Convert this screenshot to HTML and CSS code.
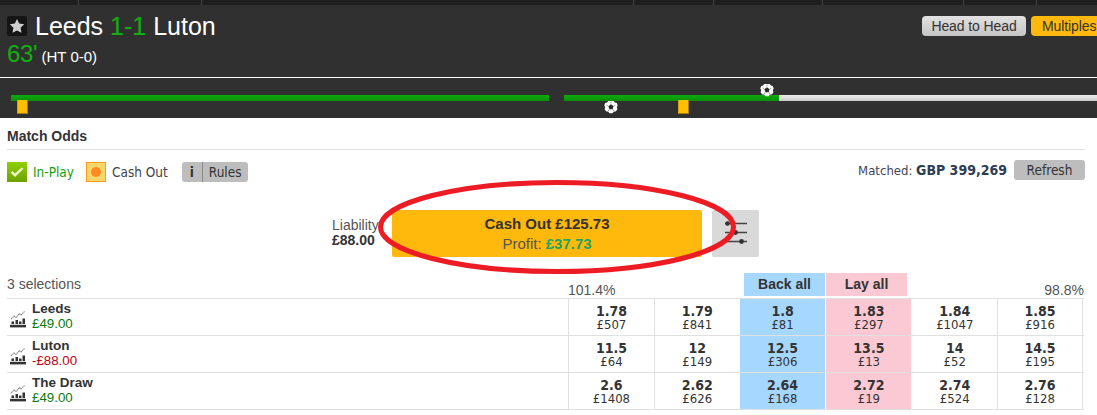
FILE: index.html
```html
<!DOCTYPE html>
<html lang="en">
<head>
<meta charset="utf-8">
<title>Leeds v Luton</title>
<link rel="stylesheet" href="styles.css">
</head>
<body>
<div class="topstrip">
  <i style="left:78px"></i><i style="left:201px"></i><i style="left:633px"></i><i style="left:713px"></i><i style="left:822px"></i><i style="left:963px"></i><i style="left:1036px"></i>
</div>
<header class="event">
  <div class="event-top">
    <div class="event-info">
      <div class="title-line">
        <span class="star"><svg width="16" height="16" viewBox="0 0 16 16"><path d="M8 1l2.200 4.600 5 .7-3.600 3.500.9 5L8 12.400l-4.500 2.400.9-5L.8 6.300l5-.7z" fill="#cfcfcf"/></svg></span>
        <h1 class="title">Leeds <span class="green">1-1</span> Luton</h1>
      </div>
      <div class="clock"><span class="green min">63'</span> <span class="ht">(HT 0-0)</span></div>
    </div>
    <div class="top-buttons">
      <a class="pill pill-grey">Head to Head</a>
      <a class="pill pill-amber">Multiples</a>
    </div>
  </div>
  <div class="timeline">
    <div class="half half-1">
      <span class="bar bar-green"></span>
      <span class="card card-1"></span>
    </div>
    <div class="half half-2">
      <span class="bar bar-green bar-played"></span><span class="bar bar-grey"></span>
      <svg class="ball ball-1" viewBox="0 0 14 14"><use href="#ball"/></svg>
      <svg class="ball ball-2" viewBox="0 0 14 14"><use href="#ball"/></svg>
      <span class="card card-2"></span>
    </div>
  </div>
</header>

<svg width="0" height="0" class="defs">
  <symbol id="ball" viewBox="0 0 14 14">
    <path d="M4.300 .9h5.400l1.200 1.600 1.900.4.900 2.700-.9 1.300.6 2.300-1.700 2.200-1.800.1-1.400 1.700H5.500L4.100 11.500l-1.800-.1L.6 9.200l.6-2.300-.9-1.300.9-2.700 1.900-.4z" fill="#fff"/>
    <path d="M7 4.300l2.600 1.900-1 3H5.400l-1-3z" fill="#2c2c2c"/>
    <path d="M7 1.600v1.800M11.400 5l-1.500 1M2.600 5l1.500 1M4.200 11l1-1.800M9.800 11l-1-1.800" stroke="#777" stroke-width=".7"/>
  </symbol>
  <symbol id="chart" viewBox="0 0 16 18">
    <path d="M1 9l3-3 2 1.500 3.500-4 1.500 1.500 3.500-3.500" fill="none" stroke="#8a8a8a" stroke-width="1.100" stroke-dasharray="1.500 .5"/>
    <path d="M1.500 11.500h2.500v2.500H1.500zM5.500 10h2.500v4H5.500zM9 11.500h2.500v2.500H9zM12.500 8.500h2.500V14h-2.500z" fill="#333"/>
    <path d="M0 14.800h16v2.600H0z" fill="#333"/>
  </symbol>
</svg>

<main class="market">
  <h2 class="market-title">Match Odds</h2>
  <div class="status-row">
    <div class="status-left">
      <span class="tick"><svg width="20" height="20" viewBox="0 0 20 20"><path d="M3.500 10.500l2-1.500 2.500 2.500 6.500-6 2 1.200-8.500 8.300z" fill="#eaf5d0"/></svg></span>
      <span class="inplay">In-Play</span>
      <span class="cashout-icon"><span class="dot"></span></span>
      <span class="cashout-label">Cash Out</span>
      <span class="rules"><span class="rules-i">i</span><span class="rules-t">Rules</span></span>
    </div>
    <div class="status-right">
      <span class="matched">Matched: <b>GBP 399,269</b></span>
      <a class="refresh">Refresh</a>
    </div>
  </div>

  <div class="cashout-row">
    <div class="liability">Liability<br><b>£88.00</b></div>
    <a class="cashout-btn">
      <span class="cashout-main">Cash Out £125.73</span>
      <span class="cashout-profit">Profit: <b>£37.73</b></span>
    </a>
    <a class="sliders">
      <svg width="26" height="26" viewBox="0 0 26 26">
        <path d="M2 2.500h22M2 11.500h22M2 20.500h22" stroke="#444" stroke-width="1.400"/>
        <circle cx="4.500" cy="2.500" r="2.300" fill="#333"/><circle cx="12.500" cy="11.500" r="2.400" fill="#333"/><circle cx="18.500" cy="20.500" r="2.400" fill="#333"/>
      </svg>
    </a>
    <svg class="ellipse" width="358" height="94" viewBox="0 0 358 94"><ellipse cx="179" cy="47" rx="176.500" ry="44.500" fill="none" stroke="#ed1c24" stroke-width="5"/></svg>
  </div>

  <div class="grid-head">
    <span class="sel-count">3 selections</span>
    <span class="pct pct-back">101.4%</span>
    <span class="spacer"></span>
    <a class="all all-back">Back all</a>
    <a class="all all-lay">Lay all</a>
    <span class="pct pct-lay">98.8%</span>
  </div>

  <div class="odds-table">
    <div class="row">
      <div class="runner"><svg class="chart" width="16" height="18"><use href="#chart"/></svg><div><div class="name">Leeds</div><div class="pos">£49.00</div></div></div>
      <div class="odd"><b>1.78</b>£507</div><div class="odd"><b>1.79</b>£841</div><div class="odd back"><b>1.8</b>£81</div><div class="odd lay"><b>1.83</b>£297</div><div class="odd"><b>1.84</b>£1047</div><div class="odd"><b>1.85</b>£916</div>
    </div>
    <div class="row">
      <div class="runner"><svg class="chart" width="16" height="18"><use href="#chart"/></svg><div><div class="name">Luton</div><div class="pos neg">-£88.00</div></div></div>
      <div class="odd"><b>11.5</b>£64</div><div class="odd"><b>12</b>£149</div><div class="odd back"><b>12.5</b>£306</div><div class="odd lay"><b>13.5</b>£13</div><div class="odd"><b>14</b>£52</div><div class="odd"><b>14.5</b>£195</div>
    </div>
    <div class="row">
      <div class="runner"><svg class="chart" width="16" height="18"><use href="#chart"/></svg><div><div class="name">The Draw</div><div class="pos">£49.00</div></div></div>
      <div class="odd"><b>2.6</b>£1408</div><div class="odd"><b>2.62</b>£626</div><div class="odd back"><b>2.64</b>£168</div><div class="odd lay"><b>2.72</b>£19</div><div class="odd"><b>2.74</b>£524</div><div class="odd"><b>2.76</b>£128</div>
    </div>
  </div>
</main>
</body>
</html>
```
FILE: styles.css
```css
* { box-sizing: border-box; }
html, body { margin: 0; padding: 0; }
body { width: 1097px; height: 415px; overflow: hidden; background: #fff; color: #333; font-family: "Liberation Sans", Arial, sans-serif; }
a { display: block; }
.defs { position: absolute; }

.topstrip { height: 5px; background: #1f1f1f; position: relative; }
.topstrip i { position: absolute; top: 0; width: 1px; height: 5px; background: #444; }

.event { height: 113px; background: #303030; color: #fff; }
.event-top { border-bottom: 1px solid #fff; display: flex; justify-content: space-between; padding: 11px 0 0 7px; height: 73px; }
.title-line { display: flex; align-items: center; gap: 8px; height: 20px; }
.star { width: 20px; height: 20px; background: #151515; border-radius: 2px; display: flex; align-items: center; justify-content: center; }
.title { margin: 0; font-size: 25px; font-weight: 400; line-height: 20px; }
.green { color: #10b010; }
.clock { margin-top: 6px; line-height: 24px; }
.min { font-size: 24px; letter-spacing: -.4px; }
.ht { font-size: 15px; }
.top-buttons { display: flex; gap: 5px; margin-right: -3px; }
.pill { height: 20px; line-height: 20px; border-radius: 4px; font-size: 14px; letter-spacing: -.1px; color: #333; text-align: center; }
.pill-grey { width: 104px; background: linear-gradient(#e2e2e2, #c4c4c4); }
.pill-amber { width: 69px; padding-left: 11px; text-align: left; background: #ffb80c; }

.timeline { display: flex; gap: 15px; padding: 17px 0 0 11px; }
.half { position: relative; display: flex; height: 6px; }
.half-1 { width: 538px; }
.half-2 { width: 533px; }
.bar { display: block; height: 6px; }
.bar-green { width: 100%; background: linear-gradient(#0cad0c, #0b8f0b); }
.bar-played { width: 215px; }
.bar-grey { width: 318px; background: linear-gradient(#eee, #c9c9c9); }
.card { position: absolute; top: 5px; width: 11px; height: 14px; background: #ffbe00; border: 1px solid #a97f00; border-top: 0; border-left-color: #d9a000; border-radius: 1px; }
.card-1 { left: 6px; }
.card-2 { left: 114px; }
.ball { position: absolute; width: 14px; height: 14px; }
.ball-1 { left: 40px; top: 5px; }
.ball-2 { left: 196px; top: -12px; }

.market { padding: 0 12px 0 7px; }
.market-title { margin: 0; height: 32px; line-height: 36px; font-size: 14px; font-weight: 700; border-bottom: 1px solid #e0e0e0; color: #333; }
.status-row { display: flex; justify-content: space-between; align-items: flex-start; margin-top: 10px; height: 50px; }
.status-left { display: flex; align-items: center; height: 20px; margin-top: 2px; font-family: "DejaVu Sans", sans-serif; font-stretch: condensed; font-size: 13.500px; }
.tick { width: 20px; height: 20px; background: linear-gradient(#8fd000, #6fa000); display: block; }
.inplay { color: #10a010; margin-left: 6px; }
.cashout-icon { width: 20px; height: 20px; margin-left: 12px; border: 1px solid #ff9a1e; background: #f7d768; display: flex; align-items: center; justify-content: center; }
.dot { width: 10px; height: 10px; border-radius: 50%; background: #ff8a22; }
.cashout-label { margin-left: 6px; color: #444; }
.rules { margin-left: 14px; display: flex; height: 20px; background: #bdbdbd; border-radius: 3px; color: #333; line-height: 20px; }
.rules-i { width: 21px; text-align: center; font-weight: 700; border-right: 1px solid #888; }
.rules-t { padding: 0 6px; }
.status-right { display: flex; align-items: center; gap: 7px; height: 20px; font-family: "DejaVu Sans", sans-serif; font-stretch: condensed; font-size: 13.500px; }
.matched { color: #445; font-size: 13px; }
.matched b { color: #2c3e50; font-size: 14px; }
.refresh { width: 71px; height: 20px; line-height: 20px; background: #bdbdbd; border-radius: 3px; text-align: center; color: #333; }

.cashout-row { position: relative; display: flex; height: 47px; margin-left: 325px; }
.liability { width: 60px; font-size: 14px; line-height: 15px; padding-top: 8px; color: #555; }
.liability b { color: #333; }
.cashout-btn { width: 310px; height: 47px; background: #ffb80c; border-radius: 2px; text-align: center; padding-top: 4px; font-size: 15px; }
.cashout-btn span { display: block; line-height: 20px; }
.cashout-main { font-weight: 700; color: #333; }
.cashout-profit { color: #555; }
.cashout-profit b { color: #1fa463; }
.sliders { width: 47px; height: 47px; margin-left: 10px; background: #d9d9d9; border-radius: 2px; display: flex; align-items: center; justify-content: center; }
.ellipse { position: absolute; left: 46px; top: -30px; }

.grid-head { display: flex; height: 25px; margin-top: 16px; font-size: 14px; color: #555; }
.sel-count { width: 561px; padding-top: 3px; font-size: 14px; }
.pct { padding-top: 9px; }
.pct-back { width: 51px; }
.spacer { width: 125px; }
.all { width: 81px; height: 23px; line-height: 23px; text-align: center; font-weight: 700; color: #333; }
.all-back { background: #a6d8ff; }
.all-lay { background: #fac9d4; margin-left: 1px; }
.pct-lay { margin-left: auto; margin-right: 1px; }

.odds-table { border-top: 1px solid #e0e0e0; width: 1077px; }
.row { display: grid; grid-template-columns: 561px repeat(6, 85.830px); height: 37px; border-bottom: 1px solid #e0e0e0; }
.runner { display: flex; align-items: center; gap: 6px; padding-left: 3px; }
.chart { margin-top: 3px; flex: none; }
.name { font-size: 13.500px; font-weight: 700; line-height: 15px; color: #333; margin-top: -2px; }
.pos { font-size: 13.300px; line-height: 16px; color: #0b7a0b; }
.neg { color: #c0001a; }
.odd { border-left: 1px solid #e0e0e0; text-align: center; font-family: "DejaVu Sans", sans-serif; font-stretch: condensed; font-size: 13px; line-height: 13px; padding-top: 5px; color: #333; }
.odd b { display: block; font-size: 14px; line-height: 14px; }
.odd:last-child { border-right: 1px solid #e0e0e0; }
.back { background: #a6d8ff; border-left-width: 0; }
.lay { background: #fac9d4; border-left-color: #fff; }
.lay + .odd { border-left-color: #fff; }
```
